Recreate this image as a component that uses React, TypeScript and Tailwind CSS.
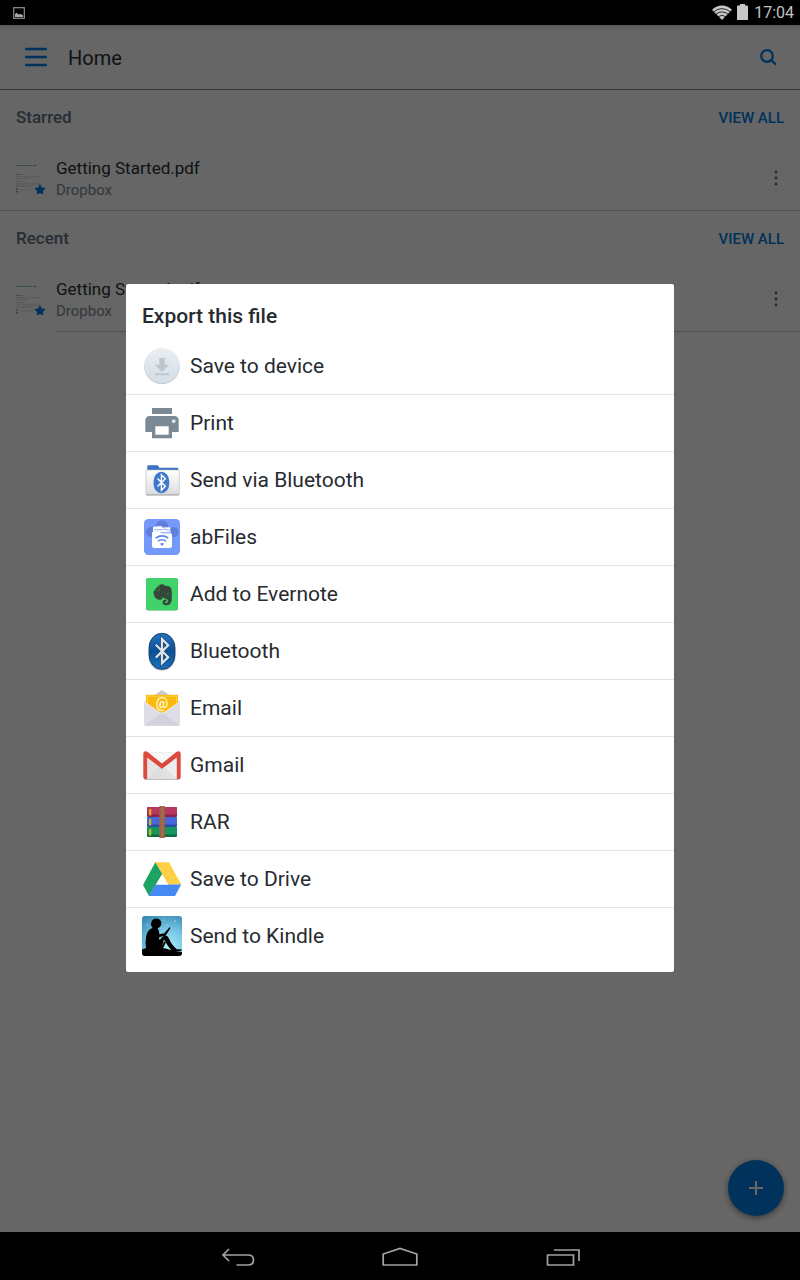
import type { ReactNode } from "react";
import { SiEvernote } from "react-icons/si";

function Icon({ children }: { children: ReactNode }) {
  return (
    <svg viewBox="0 0 40 40" className="size-10 shrink-0" aria-hidden="true">
      {children}
    </svg>
  );
}

const BT_RUNE = "M-4.6 -4.8 L4.6 4.4 L0 9 V-9 L4.6 -4.4 L-4.6 4.8";

function SaveIcon() {
  return (
    <Icon>
      <defs>
        <linearGradient id="save" x1="0" y1="0" x2="0" y2="1">
          <stop offset="0" stopColor="#e9eef2" />
          <stop offset="1" stopColor="#d3dde5" />
        </linearGradient>
      </defs>
      <circle cx="20" cy="20.5" r="17.7" fill="#aeb9c0" />
      <circle cx="20" cy="19.8" r="17.8" fill="url(#save)" />
      <path d="M17.3 12h5.4v6.7h4.6L20 26l-7.3-7.3h4.6zM12.7 27.3h14.6v2H12.7z" fill="#bcc7cf" />
    </Icon>
  );
}

function PrintIcon() {
  return (
    <Icon>
      <path d="M10 5h20v6H10z" fill="#7b8994" />
      <path
        fillRule="evenodd"
        d="M7.5 13h25a4.2 4.2 0 0 1 4.2 4.2V29H30v6.3H10V29H3.3V17.2A4.2 4.2 0 0 1 7.5 13zM13.3 23.3v8.4h13.4v-8.4z"
        fill="#7b8994"
      />
      <rect x="30" y="16.5" width="3.4" height="3.4" rx=".8" fill="#dfe4e8" />
    </Icon>
  );
}

function BluetoothFolderIcon() {
  return (
    <Icon>
      <defs>
        <linearGradient id="folder" x1="0" y1="0" x2="0" y2="1">
          <stop offset="0" stopColor="#ffffff" />
          <stop offset="1" stopColor="#dcdcdc" />
        </linearGradient>
      </defs>
      <path d="M5.3 6.3q0-1 1-1h8.9q.8 0 1.2.8l.9 1.7h18q1 0 1 1V20h-31z" fill="#3a72c4" />
      <path d="M4 33h33.3v1.6q0 1-1 1H5q-1 0-1-1z" fill="#999" />
      <rect x="4" y="10" width="33.3" height="24.4" rx="1" fill="url(#folder)" stroke="#b8b8b8" strokeWidth=".6" />
      <rect x="11.6" y="11.8" width="15.6" height="21.4" rx="7.8" ry="9" fill="#3f78cc" />
      <path d={BT_RUNE} transform="translate(19.4 22.5) scale(.85)" fill="none" stroke="#fff" strokeWidth="1.7" />
    </Icon>
  );
}

function AbFilesIcon() {
  return (
    <Icon>
      <rect x="2" y="2" width="36" height="36" rx="4.5" fill="#7598fb" />
      <g fill="#617fd8">
        <circle cx="20" cy="9.5" r="6.2" />
        <circle cx="9" cy="15" r="5" />
        <circle cx="31.5" cy="15" r="5" />
        <path d="M9 12h22v8H9z" />
      </g>
      <path d="M11 10.800q0-1 1-1.100l7-.7 1.500 1.500 7.500-.3 1 6.300H11z" fill="#fff" />
      <path d="M12 12.700h8.500M21 12l8 1.500M11 15.400h18" stroke="#7c9bf5" strokeWidth=".8" />
      <path d="M10 15h8l1.500 1.500H29q1 0 1 1v11.500q0 2-2 2H12q-2 0-2-2z" fill="#fff" />
      <path d="M13.700 21.200q6.300-4.600 12.600 0M15.900 24.200q4.100-3 8.200 0" fill="none" stroke="#5f83ef" strokeWidth="1.600" />
      <path d="M18 26.800q2-1.500 4 0l-2 2.200z" fill="#5f83ef" />
    </Icon>
  );
}

function EvernoteIcon() {
  return (
    <Icon>
      <rect x="4" y="4.6" width="32" height="32" rx="2" fill="#2fa552" />
      <rect x="4" y="4" width="32" height="32" rx="2" fill="#41d36b" />
      <SiEvernote x="10.2" y="10.3" width="20" height="20" color="#35463a" stroke="#35463a" strokeWidth=".6" />
    </Icon>
  );
}

function BluetoothIcon() {
  return (
    <Icon>
      <defs>
        <linearGradient id="bt" x1="0" y1="0" x2="0" y2="1">
          <stop offset="0" stopColor="#2476c2" />
          <stop offset=".5" stopColor="#0a5099" />
          <stop offset="1" stopColor="#1a70bc" />
        </linearGradient>
      </defs>
      <rect x="6.4" y="2" width="27.2" height="37.6" rx="13.2" ry="15" fill="#a9b2ba" />
      <rect x="7.2" y="2.4" width="25.6" height="35.8" rx="12.4" ry="14.5" fill="url(#bt)" stroke="#123f6e" strokeWidth="1" />
      <path d={BT_RUNE} transform="translate(20 20.2) scale(1.35)" fill="none" stroke="#0b3768" strokeWidth="2.600" />
      <path d={BT_RUNE} transform="translate(20 20.2) scale(1.35)" fill="none" stroke="#dfe3e7" strokeWidth="1.700" />
    </Icon>
  );
}

function EmailIcon() {
  return (
    <Icon>
      <path d="M2 14L20 2l18 12v12H2z" fill="#c9c8d3" />
      <path d="M4 6.8h32V24H4z" fill="#fbb90e" />
      <path d="M5.5 8.2h29V24h-29z" fill="none" stroke="#fdd33b" strokeWidth="1" />
      <text x="20" y="20" textAnchor="middle" fill="#fff6c4" fontSize="14" fontWeight="700" fontFamily="Roboto, sans-serif">
        @
      </text>
      <path d="M2 13.6L20 26l18-12.4V36q0 1.6-1.6 1.6H3.6Q2 37.600 2 36z" fill="#dedde5" />
      <path d="M2.6 37.200L20 25l17.400 12.200q-.4.6-1 .6H3.600q-.6 0-1-.6z" fill="#d2d1dc" />
      <path d="M2 13.600L20 26l18-12.400" fill="none" stroke="#f2f1f6" strokeWidth=".8" />
    </Icon>
  );
}

function GmailIcon() {
  return (
    <Icon>
      <path d="M2 33h36v.600q0 1.400-1.400 1.400H3.400Q2 35 2 33.600z" fill="#bdbdbd" />
      <path d="M3 7h34v27H3z" fill="#ededed" />
      <path d="M5 34l15-14 15 14z" fill="#e1e1e1" />
      <path d="M5 8h30L20 20z" fill="#f7f7f7" />
      <path d="M6 12l14 11v11H6z" fill="#d9d9d9" opacity=".45" />
      <path
        d="M1.300 8.600q0-2.300 2.400-2.300 1 0 1.900.700L20 18.400 34.400 7q.9-.7 1.900-.7 2.400 0 2.400 2.300V32q0 2-1.700 2h-2.200V12.600L20 23.800 5.200 12.600V34H3q-1.700 0-1.700-2z"
        fill="#db4a3d"
      />
    </Icon>
  );
}

function RarIcon() {
  const books = [
    { y: 5, base: "#b83761", shade: "#8a2347" },
    { y: 15, base: "#4768d8", shade: "#3048a8" },
    { y: 25, base: "#16955c", shade: "#0d6c42" },
  ];
  return (
    <Icon>
      {books.map((b) => (
        <g key={b.y}>
          <rect x="5" y={b.y} width="30" height="10" rx="1.2" fill={b.shade} />
          <rect x="5" y={b.y} width="30" height="7.5" rx="1.2" fill={b.base} />
          <rect x="7.200" y={b.y + 2} width="2" height="6.500" fill="#d9bd1c" />
        </g>
      ))}
      <rect x="17.300" y="4" width="5.600" height="32" rx=".6" fill="#a56a4b" />
      <path d="M18.200 5v30M22 5v30" stroke="#7b4930" strokeWidth=".8" strokeDasharray="1.200 1.200" />
    </Icon>
  );
}

function DriveIcon() {
  return (
    <Icon>
      <path d="M13.300 3.300H27l12.200 22.200H26z" fill="#ffcf48" />
      <path d="M13.300 3.300L20.200 15 7 37 1 26z" fill="#1da362" />
      <path d="M13.600 25.500h25.600L33 37H6.800z" fill="#4688f4" />
      <path d="M20.200 15l-.900 1.500L26 25.500z" fill="#eab52f" />
      <path d="M20.200 15.200l6 10.300H14z" fill="#fff" />
    </Icon>
  );
}

function KindleIcon() {
  return (
    <Icon>
      <defs>
        <radialGradient id="kindle" cx=".62" cy=".8" r="1">
          <stop offset="0" stopColor="#b5edfa" />
          <stop offset=".45" stopColor="#78cae6" />
          <stop offset="1" stopColor="#2f7fac" />
        </radialGradient>
        <clipPath id="kindleClip">
          <rect width="40" height="40" rx="3" />
        </clipPath>
      </defs>
      <g clipPath="url(#kindleClip)">
        <rect width="40" height="40" fill="url(#kindle)" />
        <g fill="#c8eefa">
          <circle cx="5" cy="9" r=".6" />
          <circle cx="25" cy="9" r=".6" />
          <circle cx="33" cy="5" r=".7" />
          <circle cx="36" cy="14" r=".5" />
          <circle cx="22" cy="4" r=".5" />
        </g>
        <path d="M0 33.500q5-2.400 12-2.200 9 .2 15 2.200 7 1.600 13 2.500v4H0z" />
        <circle cx="14.300" cy="7.400" r="5" />
        <path d="M9.600 6.500q-1.500 2 1 5.500-5 1.500-6.400 8-1.400 7 0 13h15l2.800-9.500q3.500 6.500 8 11.500h8.600q1.400-.4 1.200-1.400l-5-.4q-5-4-8-11-1.400-3.200-4-2.600-3 1-5.200 4.600l-.600-3 4.500-1.200q2.500-.4 3-1.800l3.600-5.400q.8-1.800-.600-1.600l-5.500 6.400q-2.200-.2-4.500.6-.600-4-1.500-5.500z" />
        <path d="M19.500 33l3.500-7" stroke="#000" strokeWidth="2" />
      </g>
    </Icon>
  );
}

const TARGETS = [
  { label: "Save to device", icon: <SaveIcon /> },
  { label: "Print", icon: <PrintIcon /> },
  { label: "Send via Bluetooth", icon: <BluetoothFolderIcon /> },
  { label: "abFiles", icon: <AbFilesIcon /> },
  { label: "Add to Evernote", icon: <EvernoteIcon /> },
  { label: "Bluetooth", icon: <BluetoothIcon /> },
  { label: "Email", icon: <EmailIcon /> },
  { label: "Gmail", icon: <GmailIcon /> },
  { label: "RAR", icon: <RarIcon /> },
  { label: "Save to Drive", icon: <DriveIcon /> },
  { label: "Send to Kindle", icon: <KindleIcon /> },
];

function StatusBar() {
  return (
    <div className="flex h-[25px] items-center bg-black pr-1.5 pl-[13px] text-[#c0c0c0]">
      <svg viewBox="0 0 12 12" className="size-3" aria-hidden="true">
        <rect x=".7" y=".7" width="10.600" height="10.600" fill="none" stroke="#8f8f8f" strokeWidth="1.200" />
        <path d="M2 10V7l1.500-1.200L5.500 7.500 8 7l2 1.500V10z" fill="#a8a8a8" />
      </svg>
      <div className="ml-auto flex items-center">
        <svg viewBox="0 0 20 16" className="h-4 w-5" aria-hidden="true">
          <path d="M0 4.700Q10-3.700 20 4.700L10 15z" fill="#c8c8c8" />
          <path d="M1.800 6.700q8.200-6.200 16.400 0M4 9.100q6-4.400 12 0M6.200 11.700q3.800-2.800 7.600 0" fill="none" stroke="#000" strokeWidth=".8" />
        </svg>
        <svg viewBox="0 0 11 18" className="ml-[5px] h-[18px] w-[11px]" aria-hidden="true">
          <path d="M3 0h5v1.500h2q1 0 1 1V16H0V2.500q0-1 1-1h2z" fill="#c8c8c8" />
        </svg>
        <span className="ml-1.5 text-base">17:04</span>
      </div>
    </div>
  );
}

function Thumbnail() {
  return (
    <svg viewBox="0 0 32 32" className="h-8 w-8 shrink-0" aria-hidden="true">
      <path d="M0 3.500h20.500" stroke="#7fb6c9" strokeWidth="1.100" strokeDasharray="4 .6 3 .8" />
      <path d="M0 12.400h7" stroke="#9ab9bb" strokeWidth="1" strokeDasharray="3 .5" />
      <path d="M0 14.600h24M0 16.400h13M0 19.400h8M0 21.200h24M0 23h24M0 24.600h15M4 28h13" stroke="#d2d2d2" strokeWidth=".8" strokeDasharray="4 .5 2 .5" />
      <path d="M.3 26.500h1.400v1.500H.3z" fill="#53a35c" />
      <path d="M.3 29h1.400v1.500H.3z" fill="#3c7ea8" />
      <path
        d="M24 22.500l1.800 3.700 4 .5-2.900 2.800.7 4-3.600-1.900-3.600 1.900.7-4-2.900-2.800 4-.5z"
        transform="translate(0 -.6)"
        fill="#007ee5"
      />
    </svg>
  );
}

function FileSection({ title, inset }: { title: string; inset?: boolean }) {
  return (
    <section>
      <div className="flex h-14 items-center justify-between px-4">
        <h2 className="text-[17px] font-medium text-[#637282]">{title}</h2>
        <a href="#all" className="text-[15px] font-medium text-[#007ee5]">
          VIEW ALL
        </a>
      </div>
      <div className="flex h-[65px] pl-4">
        <div className="flex w-10 pt-4">
          <Thumbnail />
        </div>
        <div className={inset ? "flex flex-1 items-center border-b border-[#c4c8cc] pr-4" : "-ml-14 flex flex-1 items-center border-b border-[#c4c8cc] pr-4 pl-14"}>
          <div className="flex-1 pt-0.5">
            <div className="text-[17px] leading-[22px] text-[#2a2e33]">Getting Started.pdf</div>
            <div className="text-[15px] leading-[22px] text-[#7b8994]">Dropbox</div>
          </div>
          <button type="button" aria-label="More options">
            <svg viewBox="0 0 16 16" className="size-4" fill="#5b6672">
              <circle cx="8" cy="2" r="1.400" />
              <circle cx="8" cy="8" r="1.400" />
              <circle cx="8" cy="14" r="1.400" />
            </svg>
          </button>
        </div>
      </div>
    </section>
  );
}

function ExportDialog() {
  return (
    <div role="dialog" aria-labelledby="export-title" className="w-full max-w-[548px] rounded-xs bg-white pb-2 text-[#272b30]">
      <h2 id="export-title" className="px-4 pt-4 pb-1.5 text-[21px] leading-8 font-medium">
        Export this file
      </h2>
      <ul className="divide-y divide-[#e1e3e6]">
        {TARGETS.map((target) => (
          <li key={target.label}>
            <button type="button" className="flex h-14 w-full items-center gap-2 px-4 text-left text-[21px] leading-8">
              {target.icon}
              {target.label}
            </button>
          </li>
        ))}
      </ul>
    </div>
  );
}

function NavBar() {
  return (
    <nav className="flex h-12 items-center justify-center gap-[122px] bg-black">
      <button type="button" aria-label="Back">
        <svg viewBox="0 0 40 24" className="h-6 w-10" fill="none" stroke="#a3a3a3" strokeWidth="1.700">
          <path d="M11 5L5 11l6 6M5 11h25q5.500 0 5.500 5t-5.500 5H18.500" />
        </svg>
      </button>
      <button type="button" aria-label="Home">
        <svg viewBox="0 0 40 24" className="h-6 w-10" fill="none" stroke="#a3a3a3" strokeWidth="1.700">
          <path d="M3.200 21V10L20 4.500 36.800 10v11z" />
        </svg>
      </button>
      <button type="button" aria-label="Recent apps">
        <svg viewBox="0 0 40 24" className="h-6 w-10" fill="none" stroke="#a3a3a3" strokeWidth="1.700">
          <path d="M5.500 11h26v10h-26zM12 6h25v11" />
        </svg>
      </button>
    </nav>
  );
}

export default function App() {
  return (
    <div className="flex min-h-screen flex-col bg-white font-[Roboto,sans-serif]">
      <StatusBar />
      <main className="relative flex-1">
        <header className="flex h-[65px] items-center border-b border-[#8a8a8a] bg-linear-to-b from-[#e4e4e4] via-white via-10% to-white px-6">
          <button type="button" aria-label="Open menu">
            <svg viewBox="0 0 24 24" className="size-6" stroke="#007ee5" strokeWidth="2.600" strokeLinecap="round">
              <path d="M2.300 4h19.400M2.300 12h19.400M2.300 20h19.400" />
            </svg>
          </button>
          <h1 className="ml-5 flex-1 pt-0.5 text-xl text-[#2a2e33]">Home</h1>
          <button type="button" aria-label="Search">
            <svg viewBox="0 0 16 18" className="h-[18px] w-4" fill="none" stroke="#007ee5" strokeWidth="2.200">
              <circle cx="7" cy="8" r="5.800" />
              <path d="M11 12l5 4.600" />
            </svg>
          </button>
        </header>
        <FileSection title="Starred" />
        <FileSection title="Recent" inset />
        <button
          type="button"
          aria-label="Add"
          className="absolute right-4 bottom-4 flex size-14 items-center justify-center rounded-full bg-[#007ee5] shadow-[0_2px_6px_rgba(0,0,0,0.45)]"
        >
          <svg viewBox="0 0 14 14" className="size-3.5" stroke="#fff" strokeWidth="2">
            <path d="M7 0v14M0 7h14" />
          </svg>
        </button>
        <div className="absolute inset-0 flex items-center justify-center bg-black/60 pb-0.5">
          <ExportDialog />
        </div>
      </main>
      <NavBar />
    </div>
  );
}
